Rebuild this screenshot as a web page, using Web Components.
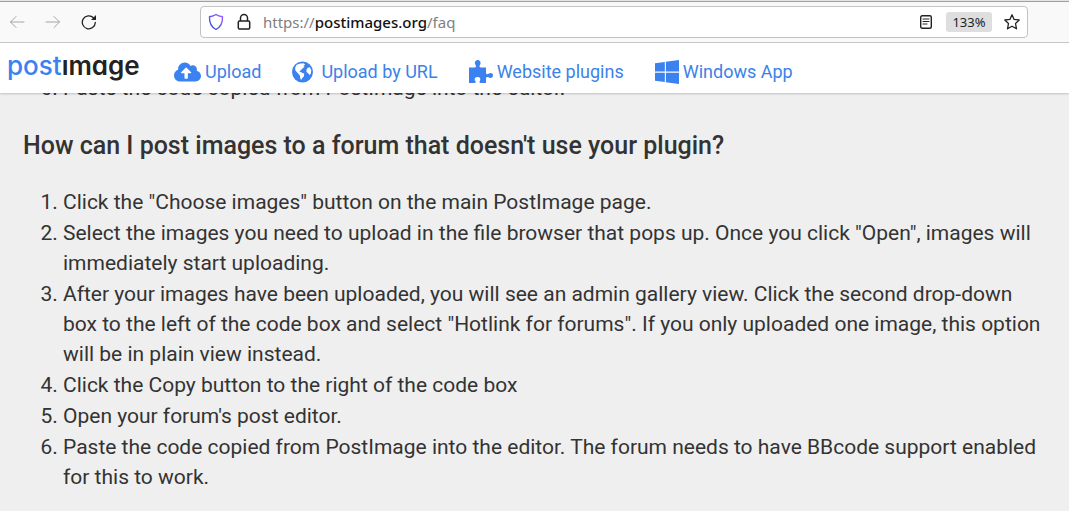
<!DOCTYPE html>
<html lang="en">
<head>
<meta charset="utf-8">
<title>Postimages FAQ</title>
<style>
  html, body { margin: 0; height: 100%; }
  body { background: #efefef; font-family: Roboto, "Liberation Sans", sans-serif; color: #333; }
</style>
</head>
<body>
<faq-window></faq-window>

<template id="browser-bar">
  <style>
    :host { display: flex; align-items: center; box-sizing: border-box; height: 43px; padding: 2px 8px 0;
      background: linear-gradient(#e4e4e4 1px, #a0a0a0 1px 2px, #f9f9fa 2px); border-bottom: 1px solid #c8c8c8; flex: none; }
    button { display: grid; place-items: center; width: 36px; height: 32px; margin: 0; padding: 0; border: 0; background: none; color: #222; }
    button:disabled { color: #a5a5a5; }
    svg { display: block; fill: none; stroke: currentColor; stroke-linecap: round; stroke-linejoin: round; }
    .tools { display: flex; width: 192px; flex: none; margin-left: -9px; }
    .field { display: flex; align-items: center; box-sizing: border-box; flex: 1; height: 32px; margin: 0 33px 0 9px; padding: 0 7px;
      background: #fff; border: 1px solid #c3c3c3; border-radius: 4px; }
    .field button { width: auto; flex: none; }
    .field .lock { margin-left: 13px; }
    .url { flex: 1; margin-left: 12px; font: 15px/20px "Noto Sans", "Open Sans", sans-serif; color: #808080; text-decoration: none; white-space: nowrap; }
    b { font-weight: 500; color: #111; }
    .field .zoom { width: 46px; height: 20px; margin: 0 12px 0 14px; border-radius: 3px; background: #dedede; font: 13px/20px "Noto Sans", "Open Sans", sans-serif; }
  </style>
  <div class="tools">
    <button disabled aria-label="Back"><svg width="16" height="16" viewBox="0 0 16 16"><path d="M15 8H1.500M7 2.500L1.500 8L7 13.500"/></svg></button>
    <button disabled aria-label="Forward"><svg width="16" height="16" viewBox="0 0 16 16"><path d="M1 8H14.500M9 2.500L14.500 8L9 13.500"/></svg></button>
    <button aria-label="Reload"><svg width="16" height="16" viewBox="0 0 16 16"><path stroke-width="1.300" d="M14.300 8.500A6.500 6.500 0 1 1 12.500 3.800L14 5"/><path fill="currentColor" stroke="none" d="M15 1V6H10Z"/></svg></button>
  </div>
  <div class="field">
    <button aria-label="Tracking protection"><svg width="16" height="18" viewBox="0 0 16 18"><defs><linearGradient id="g" x1="0" y1="1" x2="1" y2="0"><stop stop-color="#3150d8"/><stop offset="1" stop-color="#a05cff"/></linearGradient></defs><path stroke="url(#g)" stroke-width="1.400" d="M8 1.500C6 3 3.500 3.500 1.500 3.700C1.200 10 3.500 14 8 16.500C12.500 14 14.800 10 14.500 3.700C12.500 3.500 10 3 8 1.500Z"/></svg></button>
    <button class="lock" aria-label="Connection security"><svg width="14" height="18" viewBox="0 0 14 18"><path stroke-width="1.500" d="M3.500 8V5A3.500 3.500 0 0 1 10.500 5V8M2.500 8H11.500Q12.700 8 12.700 9.200V14.800Q12.700 16 11.500 16H2.500Q1.300 16 1.300 14.800V9.200Q1.300 8 2.500 8Z"/></svg></button>
    <a class="url" href="#faq">https://<b>postimages.org</b>/faq</a>
    <button aria-label="Reader view"><svg width="12" height="14" viewBox="0 0 12 14"><rect x=".7" y=".7" width="10.600" height="12.600" rx="1.500" stroke-width="1.400"/><path d="M3 4H9M3 6.500H9M3 9H7"/></svg></button>
    <button class="zoom">133%</button>
    <button aria-label="Bookmark"><svg width="16" height="16" viewBox="0 0 16 16"><path stroke-width="1.300" d="M8 .8L10.100 5.400L15.200 6L11.500 9.500L12.500 14.800L8 12.200L3.500 14.800L4.500 9.500L.8 6L5.900 5.400Z"/></svg></button>
  </div>
</template>

<template id="nav-link">
  <style>
    :host { display: block; }
    a { display: flex; align-items: center; gap: var(--gap, 4px); color: #3b82e8; text-decoration: none; font-size: 18px; line-height: 24px; white-space: nowrap; }
    svg { display: block; fill: #3b82f0; height: 24px; flex: none; }
  </style>
  <a><svg aria-hidden="true"><path/></svg><slot></slot></a>
</template>

<template id="site-header">
  <style>
    :host { display: flex; align-items: center; box-sizing: border-box; height: 50px; padding: 8px 8px 0 7px; flex: none;
      background: #fff; box-shadow: 0 1px 2px #0003; position: relative; z-index: 1; }
    .logo { width: 167px; flex: none; font: 600 26px/32px Inter, sans-serif; font-feature-settings: "cv11"; color: #222; text-decoration: none; margin-top: -12px; }
    .logo span { color: #3b82f0; font-weight: 500; }
    nav { display: flex; gap: 31px; }
    .wide { --gap: 8px; }
  </style>
  <a class="logo" href="#home" aria-label="postimage"><span>post</span>ımage</a>
  <nav>
    <nav-link icon="cloud">Upload</nav-link>
    <nav-link icon="globe" class="wide">Upload by URL</nav-link>
    <nav-link icon="puzzle">Website plugins</nav-link>
    <nav-link icon="windows">Windows App</nav-link>
  </nav>
</template>

<template id="faq-answer">
  <style>
    :host { display: block; }
    h2 { margin: 0; padding: 0 23px; font-size: 25px; line-height: 30px; font-weight: 500; }
    ol { display: grid; gap: 1px; margin: 0; padding: 0 24px 0 63px; font-size: 21px; line-height: 30px; }
    h2 + ol { margin-top: 26px; }
  </style>
</template>

<template id="faq-window">
  <style>
    :host { display: flex; flex-direction: column; height: 100vh; overflow: hidden; }
    main { flex: 1; min-height: 0; overflow: hidden; }
    .previous { margin-top: -20px; }
    .current { margin-top: 28px; }
  </style>
  <browser-bar></browser-bar>
  <site-header></site-header>
  <main>
    <faq-answer class="previous" start="6"></faq-answer>
    <faq-answer class="current" id="faq"></faq-answer>
  </main>
</template>

<script>
const icons = {
  cloud: [27, "0 0 640 512", "M537.6 226.6c4.1-10.7 6.4-22.4 6.4-34.6 0-53-43-96-96-96-19.7 0-38.1 6-53.3 16.2C367 64.2 315.3 32 256 32c-88.4 0-160 71.6-160 160 0 2.7.1 5.4.2 8.1C40.2 219.8 0 273.2 0 336c0 79.5 64.5 144 144 144h368c70.7 0 128-57.3 128-128 0-61.9-44-113.6-102.4-125.4zM393.4 288H328v112c0 8.800-7.200 16-16 16h-48c-8.800 0-16-7.200-16-16V288h-65.400c-14.300 0-21.400-17.200-11.300-27.300l105.400-105.400c6.200-6.200 16.400-6.200 22.600 0l105.400 105.400c10.100 10.100 2.900 27.300-11.300 27.300z"],
  globe: [21, "0 0 24 24", "M12 0A12 12 0 1 0 12 24A12 12 0 1 0 12 0ZM5 4L8 2.500L13 2L15 3.500L13 5L14.500 6L12 8L10 10L8.500 11.500L11 12.500L14 14L13.500 17L11.500 19L10.500 21L9.500 19.500L9 16L6.500 13L4 10.500L3.500 7.500ZM18 7L20.500 6.500L22 10L21.500 14L20 15.500L18.500 13.500L16.500 12L16.500 9.500Z"],
  puzzle: [24, "0 0 24 24", "M0 7.500H5.500C7 7.500 7.500 6.500 6.500 5C5 2.500 6.500 0 8.700 0S12.500 2.500 11 5C10 6.500 10.500 7.500 12 7.500H17V12.500C17 14.500 18.500 14.500 19.500 13.800C21.500 12.500 24 13 24 15.500S21.500 18.500 19.500 17.300C18.500 16.500 17 16.800 17 18.500V23H11.500C10 23 10.500 21.500 11 20.500C12 18.500 10.800 17 8.700 17S5 18.500 6 20.500C7 22 7 23 5.500 23H0Z"],
  windows: [24, "0 32 448 448", "M0 93.700l183.600-25.300v177.400H0V93.700zm0 324.600l183.600 25.300V268.400H0v149.900zm203.800 28L448 480V268.400H203.800v177.900zm0-380.600v180.100H448V32L203.800 65.700z"]
};

const previousSteps = ["Paste the code copied from PostImage into the editor."];
const question = "How can I post images to a forum that doesn't use your plugin?";
const steps = [
  "Click the \"Choose images\" button on the main PostImage page.",
  "Select the images you need to upload in the file browser that pops up. Once you click \"Open\", images will immediately start uploading.",
  "After your images have been uploaded, you will see an admin gallery view. Click the second drop-down box to the left of the code box and select \"Hotlink for forums\". If you only uploaded one image, this option will be in plain view instead.",
  "Click the Copy button to the right of the code box",
  "Open your forum's post editor.",
  "Paste the code copied from PostImage into the editor. The forum needs to have BBcode support enabled for this to work."
];

class TemplateElement extends HTMLElement {
  connectedCallback() {
    if (this.shadowRoot) return;
    const template = document.getElementById(this.localName);
    this.attachShadow({ mode: "open" }).append(template.content.cloneNode(true));
    this.render();
  }
  render() {}
}

customElements.define("browser-bar", class extends TemplateElement {});
customElements.define("site-header", class extends TemplateElement {});
customElements.define("nav-link", class extends TemplateElement {
  render() {
    const [width, viewBox, d] = icons[this.getAttribute("icon")];
    const svg = this.shadowRoot.querySelector("svg");
    svg.setAttribute("viewBox", viewBox);
    svg.style.width = width + "px";
    const path = svg.querySelector("path");
    path.setAttribute("d", d);
    path.setAttribute("fill-rule", "evenodd");
    this.shadowRoot.querySelector("a").href = "#" + this.getAttribute("icon");
  }
});
customElements.define("faq-answer", class extends TemplateElement {
  render() {
    const start = this.getAttribute("start");
    if (!start) {
      const heading = document.createElement("h2");
      heading.textContent = question;
      this.shadowRoot.append(heading);
    }
    const list = document.createElement("ol");
    if (start) list.start = start;
    for (const text of start ? previousSteps : steps) {
      const item = document.createElement("li");
      item.textContent = text;
      list.append(item);
    }
    this.shadowRoot.append(list);
  }
});
customElements.define("faq-window", class extends TemplateElement {});
</script>
</body>
</html>
